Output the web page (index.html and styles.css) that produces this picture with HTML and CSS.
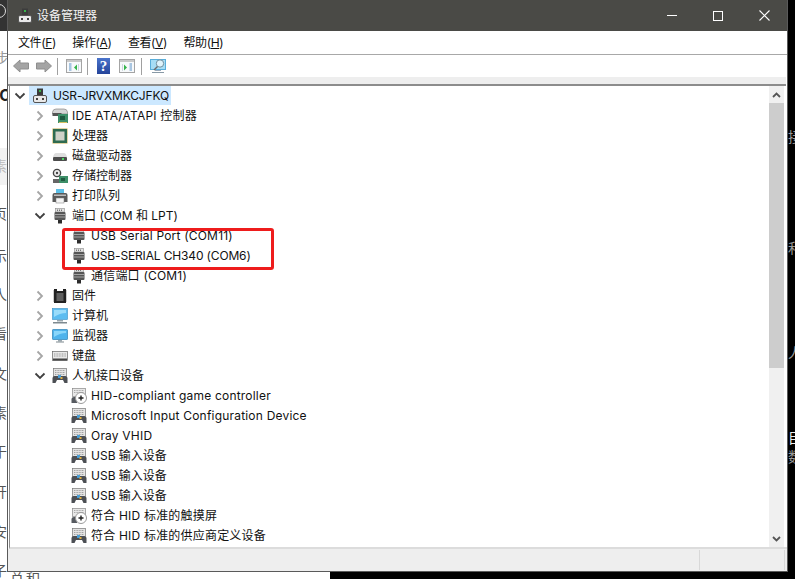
FILE: index.html
```html
<!DOCTYPE html>
<html lang="zh-CN">
<head>
<meta charset="utf-8">
<title>设备管理器</title>
<link rel="stylesheet" href="styles.css">
</head>
<body>
<svg class="defs" width="0" height="0" aria-hidden="true">
  <defs>
    <symbol id="i-pc" viewBox="0 0 16 16">
      <rect x="5" y="0.5" width="6" height="7" fill="#3c3c3c"/>
      <rect x="7" y="2" width="2" height="2" fill="#38b54a"/>
      <rect x="1.5" y="7.5" width="13" height="7" rx="1.5" fill="#e9e9e9" stroke="#555"/>
      <rect x="4" y="10" width="2" height="2" fill="#444"/>
      <rect x="10" y="10" width="2" height="2" fill="#444"/>
    </symbol>
    <symbol id="i-ide" viewBox="0 0 16 16">
      <path d="M0.5 4 Q1 1 4 1 H12 Q15 1 15.5 4 V6 H0.5Z" fill="#d5d5d5" stroke="#777" stroke-width=".6"/>
      <rect x="0.5" y="5" width="9" height="3" fill="#555"/>
      <rect x="6" y="6" width="10" height="9" fill="#3d8f68"/>
      <rect x="8" y="8" width="5" height="4" fill="#1f5a40"/>
      <path d="M7 14.5H15" stroke="#d8c060"/>
    </symbol>
    <symbol id="i-cpu" viewBox="0 0 16 16">
      <rect x="0.5" y="0.5" width="15" height="15" fill="#c5a94a"/>
      <rect x="1" y="1" width="14" height="14" fill="#2e6b50"/>
      <rect x="3.5" y="3.5" width="9" height="9" fill="#d0d2c8"/>
    </symbol>
    <symbol id="i-disk" viewBox="0 0 16 16">
      <path d="M1 9 Q2 5 4 5 H12 Q14 5 15 9Z" fill="#dedede"/>
      <rect x="1" y="9" width="14" height="4" rx="1" fill="#4c4c4c"/>
      <rect x="10" y="10" width="2" height="2" fill="#4cd964"/>
    </symbol>
    <symbol id="i-store" viewBox="0 0 16 16">
      <circle cx="5" cy="5" r="3.6" fill="#eee" stroke="#444" stroke-width="1.4"/>
      <circle cx="5" cy="5" r="1.2" fill="#444"/>
      <path d="M1 11H8V15H1Z" fill="#666"/>
      <rect x="7" y="8" width="9" height="7" fill="#3d8f68"/>
      <rect x="9" y="10" width="4" height="3" fill="#1f5a40"/>
    </symbol>
    <symbol id="i-printer" viewBox="0 0 16 16">
      <rect x="4" y="1" width="8" height="5" fill="#5cc0e8"/>
      <path d="M0.5 14V7Q0.5 5 2.5 5H13.5Q15.5 5 15.5 7V14H12V11H4V14Z" fill="#5a5a5a"/>
      <rect x="2" y="6.5" width="12" height="1.5" fill="#bbb"/>
      <rect x="4" y="10" width="8" height="5" fill="#f5f5f5" stroke="#777" stroke-width=".5"/>
    </symbol>
    <symbol id="i-port" viewBox="0 0 16 16">
      <rect x="3.500" y="0.500" width="9" height="3.500" fill="#e2e2e2" stroke="#8a8a8a" stroke-width=".6"/>
      <path d="M5.500 1.500V3M7.500 1.500V3M9.500 1.500V3" stroke="#777"/>
      <rect x="2.500" y="4" width="11" height="8" rx="1" fill="#565656"/>
      <path d="M2.500 6.500H13.500M2.500 9H13.500" stroke="#a4a4a4"/>
      <rect x="6" y="12" width="4" height="3.500" fill="#2c2c2c"/>
    </symbol>
    <symbol id="i-chip" viewBox="0 0 16 16">
      <path d="M2 1H5V3H11V1H14V15H2Z" fill="#222"/>
      <rect x="4.5" y="5" width="7" height="8" fill="#5f5f5f"/>
      <path d="M1 3H2M1 5H2M1 7H2M1 9H2M1 11H2M1 13H2M14 3H15M14 5H15M14 7H15M14 9H15M14 11H15M14 13H15" stroke="#999"/>
    </symbol>
    <symbol id="i-laptop" viewBox="0 0 16 16">
      <rect x="0.5" y="0.5" width="15" height="11" fill="#5cbcf0" stroke="#3a8fc4" stroke-width=".6"/>
      <path d="M2 2H14V5Q8 5 2 9Z" fill="#9adcfa"/>
      <rect x="5" y="12" width="6" height="1.5" fill="#9aa7ae"/>
      <rect x="1" y="14" width="14" height="1.5" fill="#7e8a90"/>
    </symbol>
    <symbol id="i-monitor" viewBox="0 0 16 16">
      <rect x="0.5" y="1.5" width="15" height="10" rx=".6" fill="#4fb3ec" stroke="#2d7fb4" stroke-width=".7"/>
      <path d="M2 3H14V5Q8 5 2 9Z" fill="#8ad6fa"/>
      <rect x="6" y="12" width="4" height="1.5" fill="#9aa7ae"/>
      <rect x="4" y="13.5" width="8" height="1" fill="#7e8a90"/>
    </symbol>
    <symbol id="i-kbd" viewBox="0 0 16 16">
      <rect x="0.5" y="3.5" width="15" height="9" fill="#e8e8e8" stroke="#666" stroke-width=".7"/>
      <path d="M2 6H14M2 8H14" stroke="#9a9a9a" stroke-dasharray="1 .6"/>
      <rect x="1" y="10.5" width="14" height="2" fill="#444"/>
    </symbol>
    <symbol id="i-hid" viewBox="0 0 16 16">
      <rect x="1.5" y="0.5" width="13" height="8" fill="#e4e4e4" stroke="#777" stroke-width=".7"/>
      <path d="M3 2.500H13M3 4.500H13M3 6.500H13" stroke="#a2a2a2" stroke-dasharray="1 .6"/>
      <path d="M0.500 15V10Q0.500 8 3 8H13Q15.500 8 15.500 10V15H12.500L11 12H5L3.500 15Z" fill="#4c4f54"/>
      <rect x="6" y="7" width="3" height="3" fill="#4a9fd8"/>
      <rect x="8.500" y="9" width="2" height="2" fill="#e0b040"/>
    </symbol>
    <symbol id="i-hidc" viewBox="0 0 16 16">
      <rect x="1.500" y="0.500" width="13" height="8" fill="#e8e8e8" stroke="#888" stroke-width=".7"/>
      <path d="M3 2.500H13M3 4.500H13" stroke="#aaa" stroke-dasharray="1 .6"/>
      <path d="M0.500 15V11Q0.500 9 3 9H6V15H3.500Z" fill="#565a60"/>
      <circle cx="10" cy="10" r="5.500" fill="#fff" stroke="#9a9a9a"/>
      <path d="M10 7.500V12.500M7.500 10H12.500" stroke="#222" stroke-width="1.400"/>
    </symbol>
    <symbol id="t-left" viewBox="0 0 16 16">
      <path d="M0.500 8 7 2V5H15.500V11H7V14Z" fill="#a4a4a4" stroke="#8e8e8e"/>
    </symbol>
    <symbol id="t-right" viewBox="0 0 16 16">
      <path d="M15.500 8 9 2V5H0.500V11H9V14Z" fill="#a4a4a4" stroke="#8e8e8e"/>
    </symbol>
    <symbol id="t-paneback" viewBox="0 0 16 16">
      <rect x="0.500" y="1.500" width="15" height="13" fill="#f7f9fb" stroke="#a4a4a4"/>
      <rect x="1" y="2" width="14" height="2" fill="#c9c9c9"/>
      <path d="M3 6H5.500M3 8H5.500M3 10H5.500M3 12H5.500" stroke="#5b93c8"/>
      <path d="M11 6.500V12.500L8 9.500Z" fill="#35b34a"/>
      <path d="M12.500 6V13" stroke="#cfd8df"/>
    </symbol>
    <symbol id="t-panefwd" viewBox="0 0 16 16">
      <rect x="0.500" y="1.500" width="15" height="13" fill="#f7f9fb" stroke="#a4a4a4"/>
      <rect x="1" y="2" width="14" height="2" fill="#c9c9c9"/>
      <path d="M10.500 6H13M10.500 8H13M10.500 10H13M10.500 12H13" stroke="#5b93c8"/>
      <path d="M5 6.500V12.500L8 9.500Z" fill="#35b34a"/>
      <path d="M3.500 6V13" stroke="#cfd8df"/>
    </symbol>
    <symbol id="t-scan" viewBox="0 0 16 16">
      <rect x="0.500" y="1.500" width="15" height="10" fill="#a6ddf5" stroke="#58aedb"/>
      <rect x="5" y="12" width="6" height="1" fill="#9ab"/>
      <rect x="2" y="14" width="12" height="1" fill="#8899a6"/>
      <circle cx="10" cy="5.500" r="3.700" fill="#dff3fb" stroke="#6f8f9f"/>
      <path d="M7.500 8.500 4 12" stroke="#6a6a6a" stroke-width="1.500"/>
    </symbol>
    <symbol id="c-right" viewBox="0 0 10 12">
      <path d="M2.500 1.500 7 6 2.500 10.500" fill="none" stroke="#a6a6a6" stroke-width="1.800"/>
    </symbol>
    <symbol id="c-down" viewBox="0 0 12 10">
      <path d="M1.500 2.500 6 7 10.500 2.500" fill="none" stroke="#404040" stroke-width="1.800"/>
    </symbol>
  </defs>
</svg>

<main class="desktop">
  <div class="bg-top"></div>
  <div class="bg-arc"></div>
  <div class="bg-line"></div>
  <div class="bg-band"></div>
  <span class="frag f1">步</span>
  <span class="frag f2">AC</span>
  <span class="frag f3">素</span>
  <span class="frag f4">页</span>
  <span class="frag f5">示</span>
  <span class="frag f6">人</span>
  <span class="frag f7">看</span>
  <span class="frag f8">文</span>
  <span class="frag f9">素</span>
  <span class="frag f10">于</span>
  <span class="frag f11">开</span>
  <span class="frag f12">安</span>
  <span class="frag f13">子</span>
  <span class="frag f14">总积</span>
  <div class="bg-black"></div>
  <span class="frag r1">接</span>
  <span class="frag r2">和</span>
  <span class="frag r3">人</span>
  <span class="frag r4">目</span>
  <span class="frag r5">数</span>

  <section class="window">
    <header class="titlebar">
      <svg class="title-icon" width="16" height="16"><use href="#i-pc"/></svg>
      <span class="title-text">设备管理器</span>
      <div class="controls">
        <span class="ctl"><span class="min"></span></span>
        <span class="ctl"><span class="max"></span></span>
        <span class="ctl">
          <svg width="11" height="11" viewBox="0 0 11 11"><path d="M.5.500 10.500 10.500M10.500.500.500 10.500" stroke="#fff" stroke-width="1.100"/></svg>
        </span>
      </div>
    </header>
    <nav class="menubar">
      <span>文件(<u>F</u>)</span>
      <span>操作(<u>A</u>)</span>
      <span>查看(<u>V</u>)</span>
      <span>帮助(<u>H</u>)</span>
    </nav>
    <div class="toolbar">
      <svg class="tb" width="16" height="16"><use href="#t-left"/></svg>
      <svg class="tb gap-s" width="16" height="16"><use href="#t-right"/></svg>
      <i class="sep"></i>
      <svg class="tb after-sep" width="16" height="16"><use href="#t-paneback"/></svg>
      <i class="sep"></i>
      <span class="help">?</span>
      <svg class="tb" width="16" height="16"><use href="#t-panefwd"/></svg>
      <i class="sep sep-last"></i>
      <svg class="tb after-sep" width="16" height="16"><use href="#t-scan"/></svg>
    </div>
    <div class="strip"></div>
    <div class="body">
      <div class="tree">
        <div class="row root"><svg class="chev" width="12" height="10"><use href="#c-down"/></svg><span class="sel"><svg width="16" height="16"><use href="#i-pc"/></svg><span class="caps">USR-JRVXMKCJFKQ</span></span></div>
        <div class="row l1"><svg class="chev" width="10" height="12"><use href="#c-right"/></svg><svg width="16" height="16"><use href="#i-ide"/></svg><span class="wide">IDE ATA/ATAPI 控制器</span></div>
        <div class="row l1"><svg class="chev" width="10" height="12"><use href="#c-right"/></svg><svg width="16" height="16"><use href="#i-cpu"/></svg><span>处理器</span></div>
        <div class="row l1"><svg class="chev" width="10" height="12"><use href="#c-right"/></svg><svg width="16" height="16"><use href="#i-disk"/></svg><span>磁盘驱动器</span></div>
        <div class="row l1"><svg class="chev" width="10" height="12"><use href="#c-right"/></svg><svg width="16" height="16"><use href="#i-store"/></svg><span>存储控制器</span></div>
        <div class="row l1"><svg class="chev" width="10" height="12"><use href="#c-right"/></svg><svg width="16" height="16"><use href="#i-printer"/></svg><span>打印队列</span></div>
        <div class="row l1"><svg class="chev" width="12" height="10"><use href="#c-down"/></svg><svg width="16" height="16"><use href="#i-port"/></svg><span>端口 (COM 和 LPT)</span></div>
        <div class="row l2"><svg width="16" height="16"><use href="#i-port"/></svg><span class="wide">USB Serial Port (COM11)</span></div>
        <div class="row l2"><svg width="16" height="16"><use href="#i-port"/></svg><span class="caps">USB-SERIAL CH340 (COM6)</span></div>
        <div class="row l2"><svg width="16" height="16"><use href="#i-port"/></svg><span class="wide">通信端口 (COM1)</span></div>
        <div class="row l1"><svg class="chev" width="10" height="12"><use href="#c-right"/></svg><svg width="16" height="16"><use href="#i-chip"/></svg><span>固件</span></div>
        <div class="row l1"><svg class="chev" width="10" height="12"><use href="#c-right"/></svg><svg width="16" height="16"><use href="#i-laptop"/></svg><span>计算机</span></div>
        <div class="row l1"><svg class="chev" width="10" height="12"><use href="#c-right"/></svg><svg width="16" height="16"><use href="#i-monitor"/></svg><span>监视器</span></div>
        <div class="row l1"><svg class="chev" width="10" height="12"><use href="#c-right"/></svg><svg width="16" height="16"><use href="#i-kbd"/></svg><span>键盘</span></div>
        <div class="row l1"><svg class="chev" width="12" height="10"><use href="#c-down"/></svg><svg width="16" height="16"><use href="#i-hid"/></svg><span>人机接口设备</span></div>
        <div class="row l2"><svg width="16" height="16"><use href="#i-hidc"/></svg><span class="wide">HID-compliant game controller</span></div>
        <div class="row l2"><svg width="16" height="16"><use href="#i-hid"/></svg><span class="wide">Microsoft Input Configuration Device</span></div>
        <div class="row l2"><svg width="16" height="16"><use href="#i-hid"/></svg><span class="wide">Oray VHID</span></div>
        <div class="row l2"><svg width="16" height="16"><use href="#i-hid"/></svg><span>USB 输入设备</span></div>
        <div class="row l2"><svg width="16" height="16"><use href="#i-hid"/></svg><span>USB 输入设备</span></div>
        <div class="row l2"><svg width="16" height="16"><use href="#i-hid"/></svg><span>USB 输入设备</span></div>
        <div class="row l2"><svg width="16" height="16"><use href="#i-hidc"/></svg><span class="wide">符合 HID 标准的触摸屏</span></div>
        <div class="row l2"><svg width="16" height="16"><use href="#i-hid"/></svg><span class="wide">符合 HID 标准的供应商定义设备</span></div>
      </div>
      <div class="scrollbar">
        <span class="sb-btn"><svg width="9" height="6" viewBox="0 0 9 6"><path d="M1 5 4.500 1.500 8 5" fill="none" stroke="#555" stroke-width="1.800"/></svg></span>
        <div class="sb-track"><div class="sb-thumb"></div></div>
        <span class="sb-btn"><svg width="9" height="6" viewBox="0 0 9 6"><path d="M1 1 4.500 4.500 8 1" fill="none" stroke="#555" stroke-width="1.800"/></svg></span>
      </div>
    </div>
    <footer class="status">
      <span class="st-a"></span>
      <span class="st-b"></span>
      <span class="st-c"></span>
    </footer>
    <div class="redbox"></div>
  </section>
</main>
</body>
</html>
```
FILE: styles.css
```css
* { box-sizing: border-box; }
html, body { margin: 0; height: 100%; overflow: hidden; background: #fff; }
body { font-family: Inter, "Noto Sans CJK SC", sans-serif; }
.defs { position: absolute; }
.desktop { position: relative; width: 795px; height: 579px; overflow: hidden; background: #fff; }

.bg-top { position: absolute; left: 0; top: 0; width: 8px; height: 31px; background: #333; }
.bg-arc { position: absolute; left: -8px; top: 4px; width: 14px; height: 14px; border: 1px solid #ddd; border-radius: 50%; }
.bg-line { position: absolute; left: 0; top: 53px; width: 8px; height: 1px; background: #ddd; }
.bg-band { position: absolute; left: 0; top: 148px; width: 8px; height: 37px; background: #f2f2f2; }
.bg-black { position: absolute; left: 330px; top: 0; width: 465px; height: 579px; background: #000; }

.frag { position: absolute; font-size: 14px; line-height: 16px; color: #555; }
.f1 { left: -5px; top: 50px; color: #999; }
.f2 { left: -12px; top: 87px; font-weight: 700; color: #222; font-size: 16px; }
.f3 { left: -7px; top: 158px; color: #bbb; }
.f4 { left: -7px; top: 206px; }
.f5 { left: -7px; top: 248px; }
.f6 { left: -7px; top: 287px; }
.f7 { left: -7px; top: 326px; }
.f8 { left: -7px; top: 366px; }
.f9 { left: -7px; top: 405px; }
.f10 { left: -7px; top: 444px; }
.f11 { left: -7px; top: 484px; }
.f12 { left: -7px; top: 524px; }
.f13 { left: -7px; top: 563px; }
.f14 { left: 10px; top: 571px; letter-spacing: 2px; }
.r1, .r2, .r3, .r4, .r5 { color: #999; z-index: 1; }
.r1 { left: 788px; top: 129px; }
.r2 { left: 788px; top: 240px; }
.r3 { left: 788px; top: 345px; }
.r4 { left: 788px; top: 430px; color: #eee; }
.r5 { left: 788px; top: 449px; }

.window {
  position: absolute; left: 7px; top: 0; width: 781px; height: 572px;
  display: flex; flex-direction: column; z-index: 2;
  background: #fff; border: 1px solid #5a5a5a; border-top: 0;
  color: #111; font-size: 12px; line-height: 16px;
}
.titlebar { height: 31px; flex: none; background: #4a4a46; color: #f4f4f4; display: flex; align-items: center; padding-left: 9px; }
.title-text { margin-left: 4px; }
.controls { margin-left: auto; display: flex; }
.ctl { width: 46px; height: 30px; display: flex; align-items: center; justify-content: center; }
.min { width: 10px; height: 1px; background: #fff; }
.max { width: 10px; height: 10px; border: 1px solid #fff; }

.menubar { height: 24px; flex: none; display: flex; align-items: center; gap: 16.5px; padding: 1px 0 0 10px; border-bottom: 1px solid #a8a8a8; letter-spacing: -0.4px; }
.toolbar { height: 22px; flex: none; display: flex; align-items: center; padding-left: 5px; gap: 5px; }
.gap-s { margin-left: 2px; }
.after-sep { margin-left: 3px; }
.sep { width: 1px; height: 17px; background: #a0a0a0; }
.sep-last { margin-left: 1px; }
.help { width: 13px; height: 16px; margin: 0 4px; background: linear-gradient(#4a74cc, #24449a); color: #fff; font: 700 15px/16px "Liberation Serif", serif; text-align: center; }

.strip { height: 9px; flex: none; background: #eee; border-bottom: 2px solid #8c8c8c; margin-right: 1px; }
.body { flex: 1; min-height: 0; display: flex; margin-left: 1px; border-left: 1px solid #8c8c8c; border-bottom: 2px solid #dcdcdc; overflow: hidden; }
.tree { flex: 1; min-width: 0; }
.row { height: 20px; display: flex; align-items: center; white-space: nowrap; }
.row svg { flex: none; }
.wide { letter-spacing: 0.2px; }
.caps { letter-spacing: -0.15px; }
.l1 { padding-left: 25px; }
.l1 > svg:nth-child(2) { margin-left: 7px; margin-right: 4px; }
.l1 > .chev[width="12"] { margin-left: -1px; }
.l1 > .chev[width="12"] + svg { margin-left: 6px; }
.l2 { padding-left: 61px; }
.l2 > svg { margin-right: 4px; }
.root { padding-left: 4px; }
.root .chev { margin-right: 3px; }
.sel { display: flex; align-items: center; align-self: flex-start; height: 19px; background: #cce8ff; padding: 0 2px 0 3px; }
.sel span { margin-left: 5px; }

.scrollbar { width: 15px; flex: none; margin-right: 3px; background: #f0f0f0; display: flex; flex-direction: column; }
.sb-btn { height: 17px; flex: none; display: flex; align-items: center; justify-content: center; }
.sb-track { flex: 1; }
.sb-thumb { height: 265px; background: #cdcdcd; }

.status { height: 22px; flex: none; background: #eee; display: flex; padding: 1px 2px 1px 0; }
.st-a { flex: 1; }
.st-b { width: 85px; border-left: 1px solid #d8d8d8; }
.st-c { width: 1px; background: #d8d8d8; }

.redbox { position: absolute; left: 54px; top: 228px; width: 212px; height: 42px; border: 3px solid #ee1c1c; border-radius: 3px; pointer-events: none; }
```
